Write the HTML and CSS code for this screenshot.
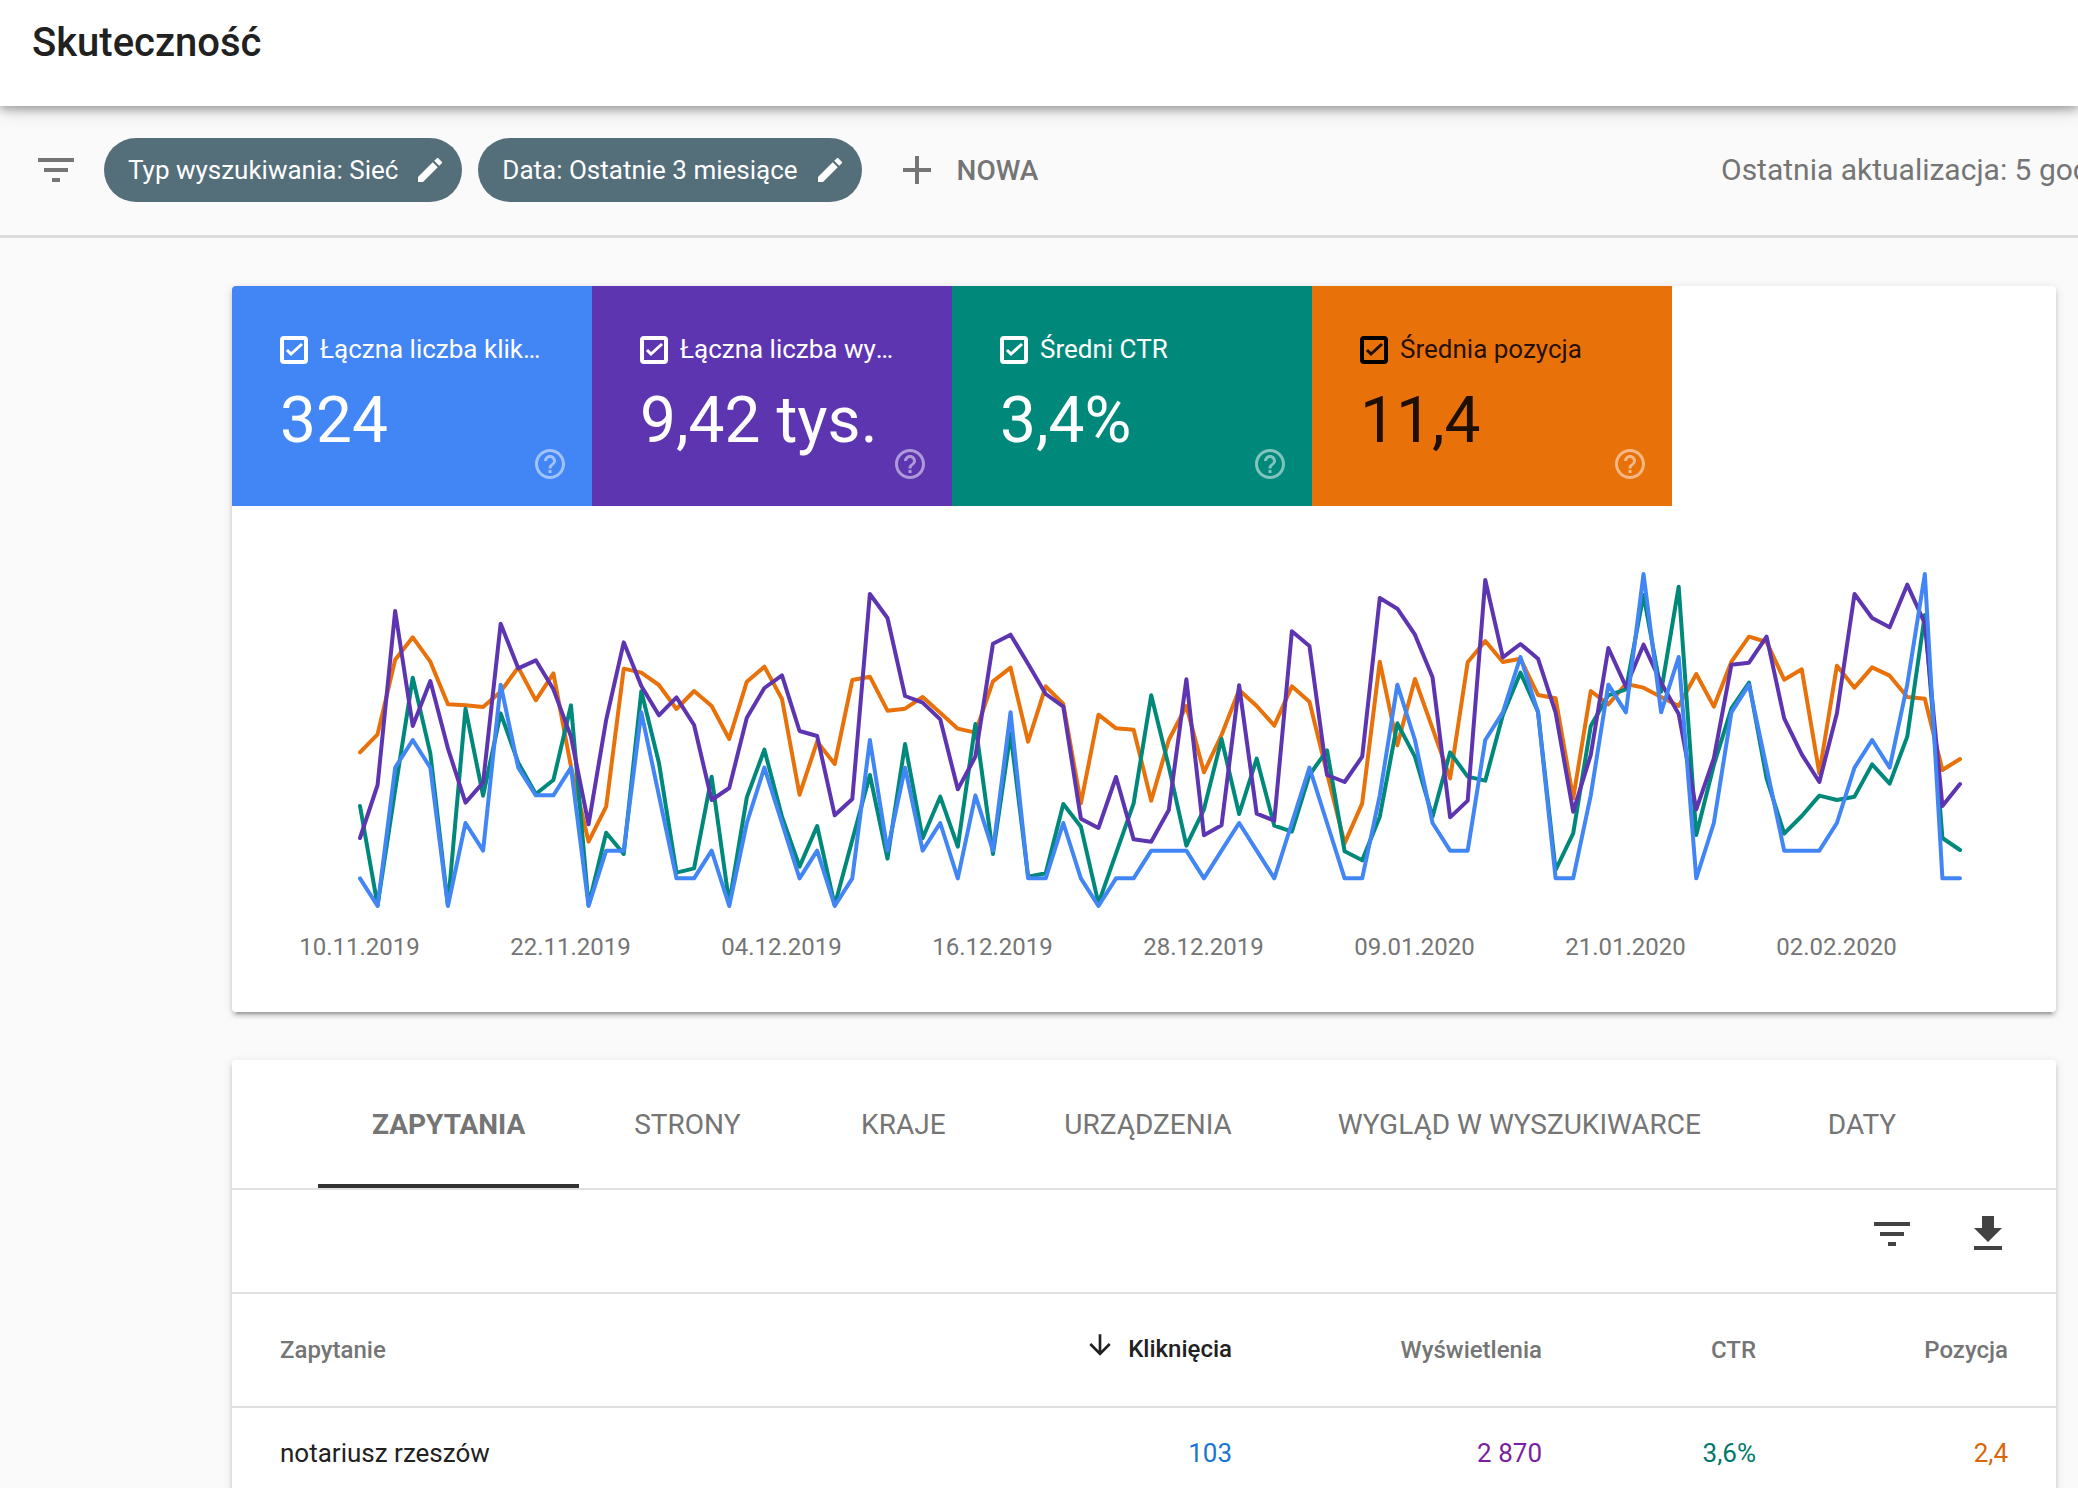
FILE: index.html
```html
<!DOCTYPE html>
<html lang="pl">
<head>
<meta charset="utf-8">
<meta name="viewport" content="width=device-width, initial-scale=1">
<title>Skuteczność</title>
<link rel="stylesheet" href="styles.css">
</head>
<body>
<div class="page">
  <header class="topbar"><h1 class="title">Skuteczność</h1></header>

  <div class="filters">
    <svg class="icon icon-muted" viewBox="0 0 24 24" aria-hidden="true"><path d="M10 18h4v-2h-4v2zM3 6v2h18V6H3zm3 7h12v-2H6v2z"/></svg>
    <div class="chips">
      <button class="chip" type="button">Typ wyszukiwania: Sieć
        <svg class="icon-small" viewBox="0 0 24 24" aria-hidden="true"><path d="M3 17.25V21h3.75L17.81 9.94l-3.75-3.75L3 17.25zM20.71 7.04c.39-.39.39-1.02 0-1.41l-2.34-2.34c-.39-.39-1.02-.39-1.41 0l-1.83 1.83 3.75 3.75 1.83-1.83z"/></svg>
      </button>
      <button class="chip" type="button">Data: Ostatnie 3 miesiące
        <svg class="icon-small" viewBox="0 0 24 24" aria-hidden="true"><path d="M3 17.25V21h3.75L17.81 9.94l-3.75-3.75L3 17.25zM20.71 7.04c.39-.39.39-1.02 0-1.41l-2.34-2.34c-.39-.39-1.02-.39-1.41 0l-1.83 1.83 3.75 3.75 1.83-1.83z"/></svg>
      </button>
    </div>
    <button class="new-filter" type="button">
      <svg class="icon" viewBox="0 0 24 24" aria-hidden="true"><path d="M19 13h-6v6h-2v-6H5v-2h6V5h2v6h6v2z"/></svg>NOWA
    </button>
    <p class="updated">Ostatnia aktualizacja: 5 god</p>
  </div>

  <main class="content">
    <section class="card">
      <div class="metrics">
        <div class="metric metric-clicks">
          <label class="metric-label">
            <span class="tick"><input class="tick-input" type="checkbox" checked><svg class="tick-mark" viewBox="0 0 28 28" aria-hidden="true"><path d="M7 14l4 4 11-10"/></svg></span>
            <span class="metric-name">Łączna liczba kliknięć</span>
          </label>
          <div class="metric-value">324</div>
          <button class="help" type="button" aria-label="Pomoc"><svg class="help-icon" viewBox="0 0 24 24" aria-hidden="true"><path d="M11 18h2v-2h-2v2zm1-16C6.48 2 2 6.48 2 12s4.480 10 10 10 10-4.480 10-10S17.520 2 12 2zm0 18c-4.410 0-8-3.590-8-8s3.590-8 8-8 8 3.590 8 8-3.590 8-8 8zm0-14c-2.210 0-4 1.790-4 4h2c0-1.100.9-2 2-2s2 .9 2 2c0 2-3 1.750-3 5h2c0-2.250 3-2.500 3-5 0-2.210-1.790-4-4-4z"/></svg></button>
        </div>
        <div class="metric metric-views">
          <label class="metric-label">
            <span class="tick"><input class="tick-input" type="checkbox" checked><svg class="tick-mark" viewBox="0 0 28 28" aria-hidden="true"><path d="M7 14l4 4 11-10"/></svg></span>
            <span class="metric-name">Łączna liczba wyświetleń</span>
          </label>
          <div class="metric-value">9,42 tys.</div>
          <button class="help" type="button" aria-label="Pomoc"><svg class="help-icon" viewBox="0 0 24 24" aria-hidden="true"><path d="M11 18h2v-2h-2v2zm1-16C6.48 2 2 6.48 2 12s4.480 10 10 10 10-4.480 10-10S17.520 2 12 2zm0 18c-4.410 0-8-3.590-8-8s3.590-8 8-8 8 3.590 8 8-3.590 8-8 8zm0-14c-2.210 0-4 1.790-4 4h2c0-1.100.9-2 2-2s2 .9 2 2c0 2-3 1.750-3 5h2c0-2.250 3-2.500 3-5 0-2.210-1.790-4-4-4z"/></svg></button>
        </div>
        <div class="metric metric-ctr">
          <label class="metric-label">
            <span class="tick"><input class="tick-input" type="checkbox" checked><svg class="tick-mark" viewBox="0 0 28 28" aria-hidden="true"><path d="M7 14l4 4 11-10"/></svg></span>
            <span class="metric-name">Średni CTR</span>
          </label>
          <div class="metric-value">3,4%</div>
          <button class="help" type="button" aria-label="Pomoc"><svg class="help-icon" viewBox="0 0 24 24" aria-hidden="true"><path d="M11 18h2v-2h-2v2zm1-16C6.48 2 2 6.48 2 12s4.480 10 10 10 10-4.480 10-10S17.520 2 12 2zm0 18c-4.410 0-8-3.590-8-8s3.590-8 8-8 8 3.590 8 8-3.590 8-8 8zm0-14c-2.210 0-4 1.790-4 4h2c0-1.100.9-2 2-2s2 .9 2 2c0 2-3 1.750-3 5h2c0-2.250 3-2.500 3-5 0-2.210-1.790-4-4-4z"/></svg></button>
        </div>
        <div class="metric metric-position">
          <label class="metric-label">
            <span class="tick"><input class="tick-input" type="checkbox" checked><svg class="tick-mark" viewBox="0 0 28 28" aria-hidden="true"><path d="M7 14l4 4 11-10"/></svg></span>
            <span class="metric-name">Średnia pozycja</span>
          </label>
          <div class="metric-value">11,4</div>
          <button class="help" type="button" aria-label="Pomoc"><svg class="help-icon" viewBox="0 0 24 24" aria-hidden="true"><path d="M11 18h2v-2h-2v2zm1-16C6.48 2 2 6.48 2 12s4.480 10 10 10 10-4.480 10-10S17.520 2 12 2zm0 18c-4.410 0-8-3.590-8-8s3.590-8 8-8 8 3.590 8 8-3.590 8-8 8zm0-14c-2.210 0-4 1.790-4 4h2c0-1.100.9-2 2-2s2 .9 2 2c0 2-3 1.750-3 5h2c0-2.250 3-2.500 3-5 0-2.210-1.790-4-4-4z"/></svg></button>
        </div>
      </div>

      <div class="plot">
        <!-- one x unit per day -->
        <svg class="lines" viewBox="0 0 91 1038" preserveAspectRatio="none" role="img" aria-label="Wykres skuteczności">
          <polyline class="line line-position" points="0,577 1,523 2,299 3,232 4,305 5,433 6,436 7,441 8,395 9,322 10,421 11,340 12,620 13,845 14,740 15,326 16,338 17,375 18,447 19,393 20,438 21,537 22,365 23,320 24,417 25,704 26,545 27,612 28,360 29,350 30,452 31,446 32,411 33,458 34,506 35,518 36,364 37,323 38,545 39,379 40,432 41,730 42,464 43,505 44,509 45,722 46,540 47,438 48,637 49,525 50,390 51,438 52,497 53,379 54,425 55,640 56,850 57,730 58,305 59,556 60,357 61,505 62,655 63,307 64,243 65,306 66,296 67,405 68,415 69,715 70,393 71,433 72,372 73,383 74,411 75,438 76,342 77,440 78,305 79,230 80,246 81,359 82,328 83,640 84,317 85,383 86,322 87,347 88,411 89,416 90,630 91,597"/>
          <polyline class="line line-ctr" points="0,738 1,1036 2,690 3,353 4,580 5,1036 6,446 7,707 8,460 9,608 10,702 11,660 12,436 13,1036 14,818 15,882 16,394 17,608 18,938 19,925 20,650 21,1030 22,712 23,569 24,770 25,920 26,798 27,1036 28,840 29,645 30,896 31,552 32,835 33,710 34,860 35,492 36,882 37,520 38,950 39,940 40,732 41,800 42,1030 43,880 44,730 45,406 46,620 47,857 48,748 49,537 50,762 51,596 52,797 53,815 54,645 55,571 56,874 57,901 58,770 59,490 60,590 61,770 62,577 63,650 64,662 65,465 66,338 67,455 68,930 69,820 70,498 71,406 72,388 73,105 74,395 75,80 76,825 77,615 78,445 79,368 80,655 81,821 82,768 83,707 84,720 85,710 86,613 87,671 88,530 89,165 90,834 91,870"/>
          <polyline class="line line-views" points="0,834 1,675 2,153 3,498 4,363 5,565 6,728 7,668 8,191 9,325 10,301 11,388 12,530 13,793 14,480 15,247 16,378 17,466 18,412 19,495 20,720 21,684 22,473 23,384 24,346 25,513 26,528 27,766 28,717 29,102 30,174 31,408 32,428 33,478 34,688 35,590 36,251 37,224 38,312 39,402 40,440 41,776 42,804 43,651 44,838 45,845 46,750 47,358 48,826 49,796 50,376 51,761 52,782 53,214 54,258 55,645 56,666 57,590 58,114 59,146 60,224 61,352 62,772 63,722 64,60 65,292 66,252 67,296 68,458 69,755 70,585 71,264 72,380 73,254 74,368 75,462 76,748 77,595 78,314 79,308 80,230 81,475 82,583 83,666 84,460 85,102 86,174 87,202 88,74 89,190 90,738 91,672"/>
          <polyline class="line line-clicks" points="0,955 1,1038 2,623 3,540 4,623 5,1038 6,789 7,872 8,374 9,623 10,706 11,706 12,623 13,1038 14,872 15,872 16,457 17,706 18,955 19,955 20,872 21,1038 22,789 23,623 24,789 25,955 26,872 27,1038 28,955 29,540 30,872 31,623 32,872 33,789 34,955 35,706 36,872 37,457 38,955 39,955 40,789 41,955 42,1038 43,955 44,955 45,872 46,872 47,872 48,955 49,872 50,789 51,872 52,955 53,789 54,623 55,789 56,955 57,955 58,706 59,374 60,540 61,789 62,872 63,872 64,540 65,457 66,291 67,457 68,955 69,955 70,706 71,374 72,457 73,42 74,457 75,291 76,955 77,789 78,457 79,374 80,623 81,872 82,872 83,872 84,789 85,623 86,540 87,623 88,374 89,42 90,955 91,955"/>
        </svg>
      </div>
      <div class="dates">
        <span>10.11.2019</span><span>22.11.2019</span><span>04.12.2019</span><span>16.12.2019</span><span>28.12.2019</span><span>09.01.2020</span><span>21.01.2020</span><span>02.02.2020</span>
      </div>
    </section>

    <section class="card">
      <nav class="tabs">
        <a class="tab tab-active" href="#zapytania">ZAPYTANIA</a>
        <a class="tab" href="#strony">STRONY</a>
        <a class="tab" href="#kraje">KRAJE</a>
        <a class="tab" href="#urzadzenia">URZĄDZENIA</a>
        <a class="tab" href="#wyglad">WYGLĄD W WYSZUKIWARCE</a>
        <a class="tab" href="#daty">DATY</a>
      </nav>
      <div class="tools">
        <button class="tool" type="button" aria-label="Filtruj"><svg class="icon" viewBox="0 0 24 24" aria-hidden="true"><path d="M10 18h4v-2h-4v2zM3 6v2h18V6H3zm3 7h12v-2H6v2z"/></svg></button>
        <button class="tool" type="button" aria-label="Pobierz"><svg class="icon" viewBox="0 0 24 24" aria-hidden="true"><path d="M19 9h-4V3H9v6H5l7 7 7-7zM5 18v2h14v-2H5z"/></svg></button>
      </div>
      <table class="results">
        <thead>
          <tr>
            <th class="col-query" scope="col">Zapytanie</th>
            <th class="col-clicks" scope="col" aria-sort="descending"><span class="sorted"><svg class="sort-icon" viewBox="0 0 24 24" aria-hidden="true"><path d="M20 12l-1.410-1.410L13 16.170V4h-2v12.170l-5.580-5.590L4 12l8 8 8-8z"/></svg>Kliknięcia</span></th>
            <th class="col-views" scope="col">Wyświetlenia</th>
            <th class="col-ctr" scope="col">CTR</th>
            <th class="col-position" scope="col">Pozycja</th>
          </tr>
        </thead>
        <tbody>
          <tr>
            <td class="col-query">notariusz rzeszów</td>
            <td class="value-clicks">103</td>
            <td class="value-views">2 870</td>
            <td class="value-ctr">3,6%</td>
            <td class="value-position">2,4</td>
          </tr>
        </tbody>
      </table>
    </section>
  </main>
</div>
</body>
</html>
```

FILE: styles.css
```css
* {
  box-sizing: border-box;
}

body {
  margin: 0;
  background: #fafafa;
  color: #212121;
  font-family: Roboto, "Liberation Sans", sans-serif;
  font-size: 26px;
}

button {
  padding: 0;
  border: 0;
  background: none;
  font: inherit;
  color: inherit;
}

svg {
  display: block;
  fill: currentColor;
}

.page {
  height: 100vh;
  overflow: hidden;
}

.icon {
  width: 48px;
  height: 48px;
  flex: none;
}

.icon-muted {
  color: #757575;
}

.icon-small {
  width: 32px;
  height: 32px;
}

/* Header and filters */
.topbar {
  height: 106px;
  padding: 19px 32px;
  background: #fff;
  box-shadow: 0 4px 8px rgba(0, 0, 0, .26), 0 0 22px rgba(0, 0, 0, .22);
}

.title {
  margin: 0;
  font-size: 40px;
  line-height: 48px;
  font-weight: 500;
}

.filters {
  display: flex;
  align-items: center;
  height: 132px;
  padding: 0 0 1px 32px;
  border-bottom: 3px solid #dcdcdc;
}

.chips {
  display: flex;
  gap: 16px;
  margin-left: 24px;
}

.chip {
  display: flex;
  align-items: center;
  gap: 16px;
  height: 64px;
  padding: 0 16px 0 24px;
  border-radius: 32px;
  background: #546e7a;
  color: #fff;
  white-space: nowrap;
}

.new-filter {
  display: flex;
  align-items: center;
  gap: 16px;
  margin-left: 31px;
  color: #757575;
  font-size: 28px;
  font-weight: 500;
}

.updated {
  flex: 0 0 357px;
  margin: 0 0 0 auto;
  overflow: hidden;
  color: #757575;
  font-size: 30px;
  line-height: 40px;
  white-space: nowrap;
}

/* Cards */
.content {
  display: grid;
  gap: 48px;
  padding: 48px 22px 48px 232px;
}

.card {
  overflow: hidden;
  border-radius: 4px;
  background: #fff;
  box-shadow: 0 6px 2px -4px rgba(0, 0, 0, .2), 0 4px 4px rgba(0, 0, 0, .14), 0 2px 10px rgba(0, 0, 0, .12);
}

.metrics {
  display: flex;
}

.metric {
  position: relative;
  width: 360px;
  height: 220px;
  padding: 44px 48px 0;
  color: #fff;
}

.metric-clicks {
  background: #4285f4;
}

.metric-views {
  background: #5e35b1;
}

.metric-ctr {
  background: #00897b;
}

.metric-position {
  background: #e8710a;
  color: rgba(0, 0, 0, .87);
}

.metric-label {
  display: flex;
  gap: 12px;
  line-height: 38px;
}

.tick {
  display: grid;
  flex: none;
  width: 28px;
  height: 28px;
  margin-top: 6px;
}

.tick-input,
.tick-mark {
  grid-area: 1 / 1;
  width: 28px;
  height: 28px;
  margin: 0;
}

.tick-input {
  appearance: none;
  border: 4px solid #fff;
  border-radius: 4px;
}

.metric-position .tick-input {
  border-color: #000;
}

.tick-mark {
  fill: none;
  stroke: currentColor;
  stroke-width: 3;
  pointer-events: none;
}

.metric-name {
  overflow: hidden;
  text-overflow: ellipsis;
  white-space: nowrap;
}

.metric-value {
  margin-top: 15px;
  font-size: 64px;
  line-height: 76px;
}

.help {
  position: absolute;
  right: 24px;
  bottom: 24px;
  color: rgba(255, 255, 255, .5);
}

.help-icon {
  width: 36px;
  height: 36px;
}

/* Chart */
.plot {
  padding: 54px 96px 0 128px;
}

.lines {
  width: 100%;
  height: 346px;
  overflow: visible;
}

.line {
  fill: none;
  stroke-width: 4;
  stroke-linecap: round;
  stroke-linejoin: round;
  vector-effect: non-scaling-stroke;
}

.line-clicks {
  stroke: #4285f4;
}

.line-views {
  stroke: #5e35b1;
}

.line-ctr {
  stroke: #00897b;
}

.line-position {
  stroke: #e8710a;
}

.dates {
  display: grid;
  grid-template-columns: repeat(8, 1fr);
  padding: 25px 114px 49px 22px;
  color: #757575;
  font-size: 24px;
  line-height: 32px;
  text-align: center;
}

/* Tabs and table */
.tabs {
  display: flex;
  justify-content: center;
  height: 130px;
  border-bottom: 2px solid #e0e0e0;
}

.tab {
  min-width: 214px;
  padding: 5px 53px 0;
  border-bottom: 4px solid transparent;
  color: #757575;
  font-size: 28px;
  line-height: 119px;
  text-align: center;
  text-decoration: none;
  white-space: nowrap;
}

.tab:not(.tab-active) {
  min-width: 216px;
}

.tab-active {
  padding: 5px 54px 0;
  border-bottom-color: #333;
  font-weight: 700;
}

.tools {
  display: flex;
  justify-content: flex-end;
  gap: 48px;
  height: 104px;
  padding: 20px 44px 0;
  border-bottom: 2px solid #e0e0e0;
  color: #424242;
}

.tool {
  height: 48px;
}

.results {
  width: 100%;
  border-collapse: separate;
  border-spacing: 0;
  table-layout: fixed;
}

.results th,
.results td {
  padding: 0;
  text-align: right;
}

.results th {
  height: 114px;
  border-bottom: 2px solid #e0e0e0;
  color: #757575;
  font-size: 24px;
  font-weight: 500;
}

.results td {
  height: 90px;
}

.results .col-query {
  padding-left: 48px;
  text-align: left;
}

.results .col-clicks {
  width: 300px;
  color: #212121;
}

.col-views {
  width: 310px;
}

.col-ctr {
  width: 214px;
}

.col-position {
  width: 300px;
}

.results tr > :last-child {
  padding-right: 48px;
}

.sorted {
  display: inline-flex;
  gap: 12px;
  line-height: 32px;
}

.sort-icon {
  width: 32px;
  height: 32px;
  margin-top: -4px;
}

.value-clicks {
  color: #1976d2;
}

.value-views {
  color: #7b1fa2;
}

.value-ctr {
  color: #00796b;
}

.value-position {
  color: #d9660a;
}
```
